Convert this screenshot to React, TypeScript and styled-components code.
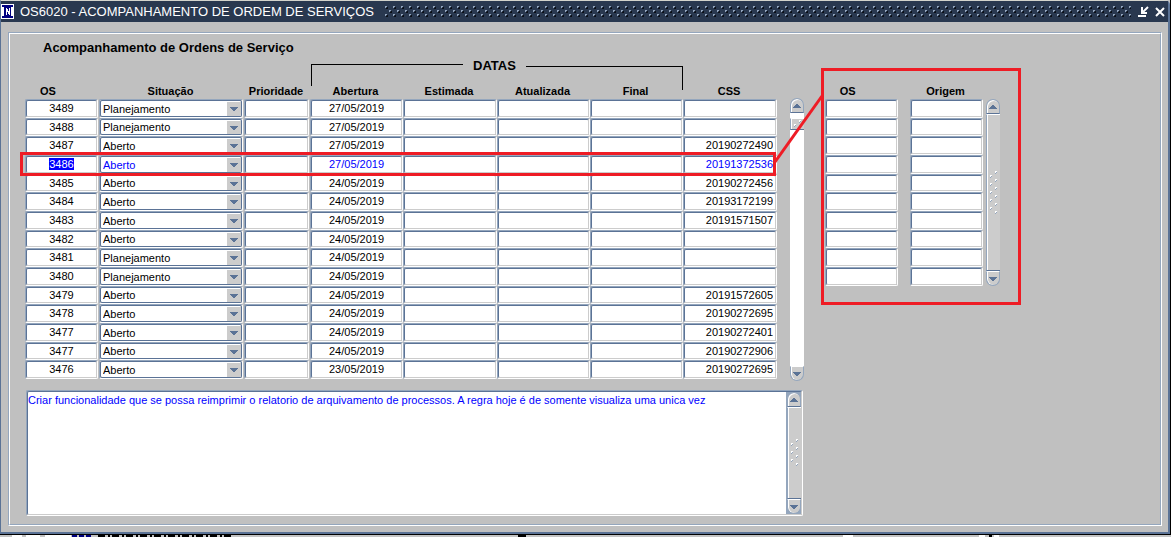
import React, { useEffect, useRef } from "react";
import styled, { createGlobalStyle, css } from "styled-components";

const face = "#c0c0c0";
const light = "#94a6bd";
const steel = "#5b7396";
const shade = "#cccccc";
const red = "#ee1c25";

const GlobalStyle = createGlobalStyle`
  * { box-sizing: border-box; }
  body {
    margin: 0;
    background: ${face};
    color: #000;
    font: 11px/15px "Liberation Sans", Arial, sans-serif;
  }
  button, input, select, textarea { font: inherit; color: inherit; margin: 0; }
`;

const Window = styled.main`
  border-top: 1px solid #d4d4cc;
  border-left: 1px solid ${steel};
  border-right: 2px solid ${steel};
  border-bottom: 2px solid ${steel};
  background: ${face};
  border-radius: 0 5px 0 0;
`;

const Backdrop = styled.div`
  min-height: 100vh;
  background: #c4c4c4;
  overflow: hidden;
`;

const WindowShadow = styled.div`
  border-right: 1px solid #000;
  border-bottom: 1px solid #000;
`;

const TitleBar = styled.header`
  display: flex;
  align-items: center;
  height: 21px;
  padding: 0 3px 0 0;
  gap: 6px;
  background: #29384f;
  color: #fff;
`;

const WindowTitle = styled.h1`
  margin: 0;
  font-size: 13px;
  line-height: 20px;
  font-weight: 400;
  white-space: nowrap;
`;

const Grip = styled.svg`
  flex: 1;
  min-width: 0;
  height: 11px;
  margin: 0 1px 0 5px;
`;

const WindowButton = styled.button`
  display: flex;
  padding: 0;
  border: 0;
  background: none;
`;

const Body = styled.div`
  padding: 10px 6px 6px 7px;
`;

const Frame = styled.div`
  border: 1px solid ${light};
  border-right-color: #fff;
  border-bottom-color: #fff;
`;

const FrameInner = styled.div`
  display: flex;
  align-items: flex-start;
  gap: 17px;
  padding: 5px 15px 8px;
  border: 1px solid #fff;
  border-right-color: ${light};
  border-bottom-color: ${light};
`;

const Orders = styled.section`
  flex: none;
`;

const Heading = styled.h2`
  margin: 0 0 0 18px;
  font-size: 13px;
  line-height: 18px;
  font-weight: 700;
`;

const GridArea = styled.div`
  display: flex;
  align-items: flex-end;
  gap: 13px;
`;

const Table = styled.table<{ $width: number }>`
  width: ${(p) => p.$width}px;
  margin-bottom: 2px;
  table-layout: fixed;
  border-collapse: collapse;
`;

const HeadCell = styled.th<{ $after?: number }>`
  height: 15px;
  padding: 0 ${(p) => p.$after ?? 2}px 0 0;
  line-height: 14px;
  font-weight: 700;
  vertical-align: top;
  white-space: nowrap;
`;

const GroupCell = styled.th`
  padding: 0;
`;

const Bracket = styled.div`
  display: flex;
  align-items: flex-start;
  height: 27px;
  gap: 10px;
  padding-left: 1px;
  font-size: 13px;
  line-height: 18px;
`;

const BracketLine = styled.span<{ $side: "left" | "right" }>`
  border-top: 1px solid #000;
  ${(p) => p.$side === "left"
    ? css`flex: none; width: 152px; height: 22px; margin-top: 7px; border-left: 1px solid #000;`
    : css`flex: 1; height: 24px; margin-top: 9px; border-right: 1px solid #000;`}
`;

const Row = styled.tr<{ $active?: boolean }>`
  height: 19px;
  &:nth-child(3n + 2) { height: 18px; }
  ${(p) => p.$active && css`
    position: relative;
    z-index: 1;
    color: #00f;
  `}
`;

const Cell = styled.td<{ $gap?: number }>`
  height: inherit;
  padding: 0 ${(p) => p.$gap ?? 0}px 0 0;
`;

const sunken = css`
  border: 1px solid ${steel};
  border-right-color: ${shade};
  border-bottom-color: ${shade};
  border-radius: 2px;
  background: #fff;
`;

const FieldEdge = styled.div`
  display: flex;
  height: 100%;
  border: 1px solid #fff;
  border-top-color: ${light};
  border-left-color: ${light};
  border-radius: 2px;
`;

const Field = styled.input<{ $align?: "center" | "right" }>`
  ${sunken}
  width: 100%;
  min-width: 0;
  height: 100%;
  padding: 0 2px 1px;
  line-height: 13px;
  text-align: ${(p) => p.$align ?? "left"};
  outline: none;
  &::selection { background: #00f; color: #fff; }
`;

const Combo = styled.div`
  ${sunken}
  display: flex;
  width: 100%;
  border-right-color: ${steel};
  border-bottom-color: ${steel};
`;

const Select = styled.select`
  appearance: none;
  flex: 1;
  min-width: 0;
  padding: 1px 0 0 2px;
  border: 0;
  background: none;
  line-height: 13px;
  outline: none;
`;

const ComboArrow = styled.span`
  display: flex;
  align-items: center;
  justify-content: center;
  width: 14px;
  margin-top: 1px;
  background: ${shade};
`;

const RowMark = styled.span`
  position: absolute;
  inset: -3px 1px -2px -5px;
  border: 3px solid ${red};
  pointer-events: none;
`;

const Connector = styled.svg`
  position: absolute;
  left: 100%;
  bottom: 10px;
  margin-left: -3px;
  pointer-events: none;
`;

const Bar = styled.div<{ $length: number }>`
  display: flex;
  flex-direction: column;
  flex: none;
  width: 14px;
  height: ${(p) => p.$length}px;
`;

const BarButton = styled.button<{ $end: "up" | "down" }>`
  display: flex;
  align-items: center;
  justify-content: center;
  width: 14px;
  height: 15px;
  padding: 0;
  border: 1px solid ${light};
  background: ${shade};
  ${(p) => p.$end === "up"
    ? css`border-radius: 7px 7px 0 0; border-bottom-color: ${steel}; box-shadow: inset 1px 1px #fff;`
    : css`border-radius: 0 0 7px 7px; border-top-color: #fff; box-shadow: inset 1px 0 #fff;`}
`;

const Track = styled.div<{ $open?: boolean }>`
  display: flex;
  flex-direction: column;
  flex: 1;
  padding-top: ${(p) => (p.$open ? 5 : 0)}px;
  background: ${(p) => (p.$open ? "#fff" : shade)};
`;

const Thumb = styled.div<{ $short?: boolean }>`
  display: flex;
  align-items: center;
  justify-content: center;
  flex: ${(p) => (p.$short ? "none" : "1")};
  height: ${(p) => (p.$short ? "12px" : "auto")};
  border-left: 1px solid ${light};
  border-top: 1px solid #fff;
  border-bottom: 1px solid ${steel};
  box-shadow: inset 1px 0 #fff;
  background: ${shade};
`;

const Note = styled.div`
  display: flex;
  height: 126px;
  margin: 9px 1px 0;
  border: 1px solid #fff;
  border-top-color: ${light};
  border-left-color: ${light};
  border-radius: 2px;
`;

const NoteInner = styled.div`
  ${sunken}
  display: flex;
  flex: 1;
`;

const NoteText = styled.textarea`
  flex: 1;
  min-width: 0;
  padding: 1px 0;
  border: 0;
  border-right: 1px solid ${light};
  background: none;
  color: #00f;
  resize: none;
  outline: none;
  overflow: hidden;
`;

const NoteBar = styled.div`
  display: flex;
  background: ${light};
`;

const Origins = styled.section`
  display: flex;
  align-items: flex-start;
  gap: 3px;
  width: 200px;
  height: 237px;
  margin-top: 29px;
  padding: 13px 0 0 1px;
  border: 3px solid ${red};
`;

const OriginsBar = styled.div`
  padding-top: 15px;
`;

const Remnants = styled.svg`
  display: block;
  width: 100%;
  height: 2px;
`;

function Triangle({ up = false }: { up?: boolean }) {
  return (
    <svg width="8" height="4" viewBox="0 0 8 4" shapeRendering="crispEdges" aria-hidden>
      <path d={up ? "M3 0h2v1h1v1h1v1h1v1H0V3h1V2h1V1h1z" : "M0 0h8v1H7v1H6v1H5v1H3V3H2V2H1V1H0z"} fill={steel} />
    </svg>
  );
}

function Dots({ rows }: { rows: number }) {
  return (
    <svg width="9" height={rows * 4} shapeRendering="crispEdges" aria-hidden>
      {Array.from({ length: rows }, (_, i) => {
        const x = i % 2 ? 1 : 6;
        return (
          <g key={i}>
            <path d={`M${x} ${i * 4}h2v1h-1v1h-1z`} fill="#fff" />
            <path d={`M${x + 2} ${i * 4 + 1}v1h-1v1h-1v-1h1v-1z`} fill={light} />
          </g>
        );
      })}
    </svg>
  );
}

function Scrollbar({ length, dots, short }: { length: number; dots: number; short?: boolean }) {
  return (
    <Bar $length={length}>
      <BarButton $end="up" type="button" aria-label="Rolar para cima"><Triangle up /></BarButton>
      <Track $open={short}>
        <Thumb $short={short}><Dots rows={dots} /></Thumb>
      </Track>
      <BarButton $end="down" type="button" aria-label="Rolar para baixo"><Triangle /></BarButton>
    </Bar>
  );
}

type Order = { os: string; status: string; opened: string; css: string; active?: boolean };

const P = "Planejamento";
const A = "Aberto";
const orders: Order[] = [
  { os: "3489", status: P, opened: "27/05/2019", css: "" },
  { os: "3488", status: P, opened: "27/05/2019", css: "" },
  { os: "3487", status: A, opened: "27/05/2019", css: "20190272490" },
  { os: "3486", status: A, opened: "27/05/2019", css: "20191372536", active: true },
  { os: "3485", status: A, opened: "24/05/2019", css: "20190272456" },
  { os: "3484", status: A, opened: "24/05/2019", css: "20193172199" },
  { os: "3483", status: A, opened: "24/05/2019", css: "20191571507" },
  { os: "3482", status: A, opened: "24/05/2019", css: "" },
  { os: "3481", status: P, opened: "24/05/2019", css: "" },
  { os: "3480", status: P, opened: "24/05/2019", css: "" },
  { os: "3479", status: A, opened: "24/05/2019", css: "20191572605" },
  { os: "3478", status: A, opened: "24/05/2019", css: "20190272695" },
  { os: "3477", status: A, opened: "24/05/2019", css: "20190272401" },
  { os: "3477", status: A, opened: "24/05/2019", css: "20190272906" },
  { os: "3476", status: A, opened: "23/05/2019", css: "20190272695" },
];

const Column = styled.col<{ $width: number }>`
  width: ${(p) => p.$width}px;
`;

function OrderRow({ order }: { order: Order }) {
  const osRef = useRef<HTMLInputElement>(null);
  useEffect(() => {
    if (order.active && osRef.current) {
      osRef.current.focus();
      osRef.current.select();
    }
  }, [order.active]);
  return (
    <Row $active={order.active}>
      <Cell $gap={1}><FieldEdge><Field ref={osRef} $align="center" aria-label="OS" defaultValue={order.os} /></FieldEdge></Cell>
      <Cell $gap={1}>
        <FieldEdge>
          <Combo>
            <Select aria-label="Situação" defaultValue={order.status}>
              <option>{P}</option>
              <option>{A}</option>
            </Select>
            <ComboArrow><Triangle /></ComboArrow>
          </Combo>
        </FieldEdge>
      </Cell>
      <Cell $gap={1}><FieldEdge><Field aria-label="Prioridade" /></FieldEdge></Cell>
      <Cell><FieldEdge><Field $align="center" aria-label="Abertura" defaultValue={order.opened} /></FieldEdge></Cell>
      <Cell><FieldEdge><Field aria-label="Estimada" /></FieldEdge></Cell>
      <Cell><FieldEdge><Field aria-label="Atualizada" /></FieldEdge></Cell>
      <Cell><FieldEdge><Field aria-label="Final" /></FieldEdge></Cell>
      <Cell>
        <FieldEdge><Field $align="right" aria-label="CSS" defaultValue={order.css} /></FieldEdge>
        {order.active && (
          <>
            <RowMark />
            <Connector width="50" height="70" aria-hidden>
              <path d="M1 68L48 2" stroke={red} strokeWidth="3" />
            </Connector>
          </>
        )}
      </Cell>
    </Row>
  );
}

const orderWidths = [74, 145, 66, 93, 94, 93, 93, 94];
const originWidths = [85, 73];
const sum = (values: number[]) => values.reduce((a, b) => a + b, 0);

export default function App() {
  return (
    <Backdrop>
      <GlobalStyle />
      <WindowShadow>
        <Window>
          <TitleBar>
            <svg width="13" height="15" viewBox="0 0 13 15" shapeRendering="crispEdges" aria-hidden>
              <path d="M0 0h13v15H0z" fill="#fff" />
              <path d="M1 1h11v2h-2v9h2v2H1v-2h2V3H1z" fill="#000080" />
              <path d="M5 4h1v1h1v2h1V4h1v7H8v-1H7V8H6v3H5z" fill="#fff" />
            </svg>
            <WindowTitle>OS6020 - ACOMPANHAMENTO DE ORDEM DE SERVIÇOS</WindowTitle>
            <Grip shapeRendering="crispEdges" aria-hidden>
              <defs>
                <pattern id="grip" width="8" height="8" patternUnits="userSpaceOnUse">
                  <path d="M0 0h2v1H1v1H0zM4 4h2v1H5v1H4z" fill={light} />
                  <path d="M2 1v1H1v1h2V1zM6 5v1H5v1h2V5z" fill="#0b0f16" />
                </pattern>
              </defs>
              <rect width="100%" height="11" fill="url(#grip)" />
            </Grip>
            <WindowButton type="button" aria-label="Minimizar">
              <svg width="11" height="11" viewBox="0 0 11 11" fill="none" stroke="#fff" aria-hidden>
                <path d="M0 10h8" strokeWidth="2" />
                <path d="M10 1L5 6" strokeWidth="2" />
                <path d="M4 1V7H9" strokeWidth="2" />
              </svg>
            </WindowButton>
            <WindowButton type="button" aria-label="Fechar">
              <svg width="10" height="10" viewBox="0 0 10 10" stroke="#fff" strokeWidth="2" aria-hidden>
                <path d="M1 1l8 8M9 1L1 9" />
              </svg>
            </WindowButton>
          </TitleBar>
          <Body>
            <Frame>
              <FrameInner>
                <Orders>
                  <Heading>Acompanhamento de Ordens de Serviço</Heading>
                  <GridArea>
                    <Table $width={sum(orderWidths)}>
                      <colgroup>
                        {orderWidths.map((w, i) => <Column key={i} $width={w} />)}
                      </colgroup>
                      <thead>
                        <tr>
                          <td colSpan={3} />
                          <GroupCell colSpan={4}>
                            <Bracket>
                              <BracketLine $side="left" />
                              DATAS
                              <BracketLine $side="right" />
                            </Bracket>
                          </GroupCell>
                          <td />
                        </tr>
                        <tr>
                          <HeadCell $after={28}>OS</HeadCell>
                          <HeadCell>Situação</HeadCell>
                          <HeadCell>Prioridade</HeadCell>
                          <HeadCell>Abertura</HeadCell>
                          <HeadCell>Estimada</HeadCell>
                          <HeadCell>Atualizada</HeadCell>
                          <HeadCell>Final</HeadCell>
                          <HeadCell>CSS</HeadCell>
                        </tr>
                      </thead>
                      <tbody>
                        {orders.map((o, i) => <OrderRow key={i} order={o} />)}
                      </tbody>
                    </Table>
                    <Scrollbar length={283} dots={2} short />
                  </GridArea>
                  <Note>
                    <NoteInner>
                      <NoteText
                        aria-label="Descrição"
                        defaultValue="Criar funcionalidade que se possa reimprimir o relatorio de arquivamento de processos. A regra hoje é de somente visualiza uma unica vez"
                      />
                      <NoteBar><Scrollbar length={122} dots={7} /></NoteBar>
                    </NoteInner>
                  </Note>
                </Orders>
                <Origins>
                  <Table $width={sum(originWidths)}>
                    <colgroup>
                      {originWidths.map((w, i) => <Column key={i} $width={w} />)}
                    </colgroup>
                    <thead>
                      <tr>
                        <HeadCell $after={40}>OS</HeadCell>
                        <HeadCell>Origem</HeadCell>
                      </tr>
                    </thead>
                    <tbody>
                      {Array.from({ length: 10 }, (_, i) => (
                        <Row key={i}>
                          <Cell $gap={12}><FieldEdge><Field aria-label="OS" /></FieldEdge></Cell>
                          <Cell><FieldEdge><Field aria-label="Origem" /></FieldEdge></Cell>
                        </Row>
                      ))}
                    </tbody>
                  </Table>
                  <OriginsBar><Scrollbar length={187} dots={11} /></OriginsBar>
                </Origins>
              </FrameInner>
            </Frame>
          </Body>
        </Window>
      </WindowShadow>
      <Remnants shapeRendering="crispEdges" aria-hidden>
        <path d="M12 1h10M26 1h14M45 1h26M843 1h10M979 1h6M994 1h5" stroke="#fff" strokeWidth="2" />
        <path d="M72 1h20" stroke="#000080" strokeWidth="2" strokeDasharray="5 2" />
        <path d="M98 1h136" stroke="#000" strokeWidth="2" strokeDasharray="7 3 2 2" />
        <path d="M518 1h8M989 1h3" stroke="#000" strokeWidth="2" />
      </Remnants>
    </Backdrop>
  );
}
